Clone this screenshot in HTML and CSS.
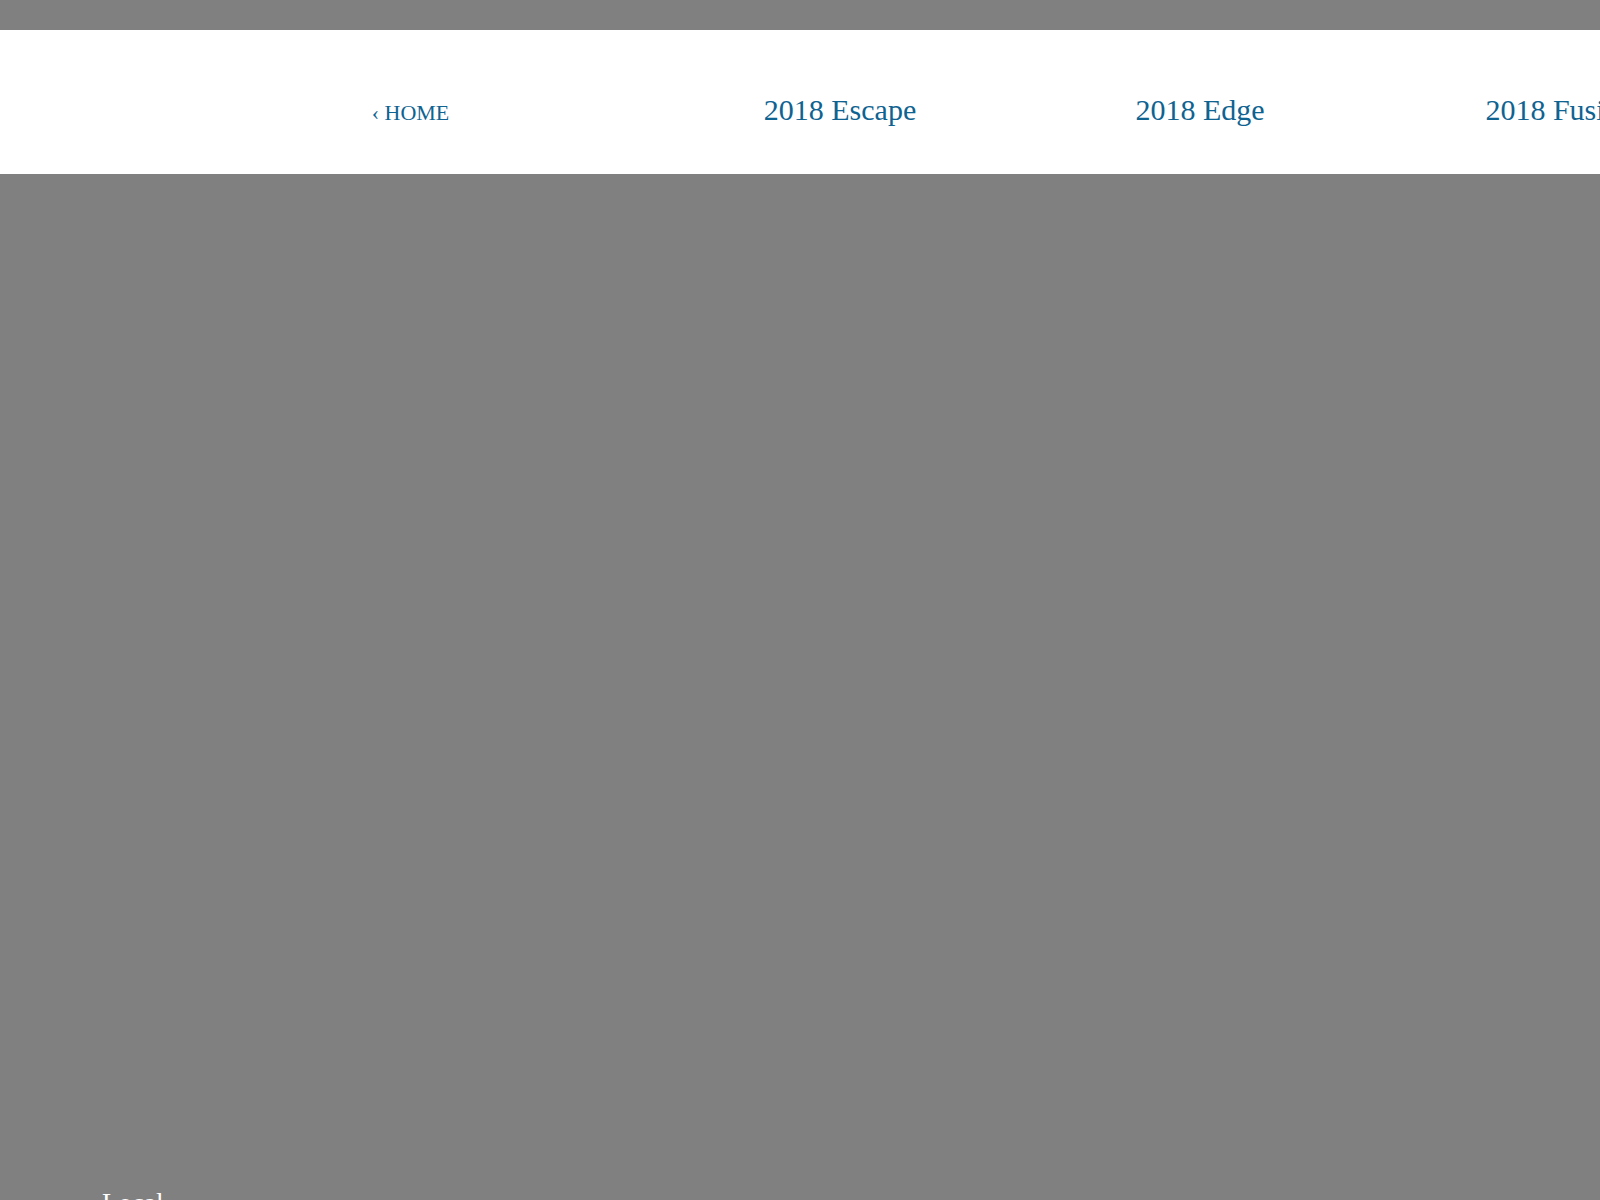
FILE: index.html
```html
<!DOCTYPE html>
<html>
<head>
<meta charset="utf-8">
<title>2018 Models</title>
<link rel="stylesheet" href="styles.css">
</head>
<body>
<div class="page">
  <div class="topbar"></div>
  <nav class="nav">
    <a class="nav-item nav-home" href="#">&lsaquo; HOME</a>
    <a class="nav-item" href="#">2018 Escape</a>
    <a class="nav-item" href="#">2018 Edge</a>
    <a class="nav-item" href="#">2018 Fusion</a>
  </nav>
  <main class="hero"></main>
  <section class="local">
    <h2 class="local-title">Local</h2>
  </section>
</div>
</body>
</html>
```
FILE: styles.css
```css
html, body {
  margin: 0;
  padding: 0;
  background: #808080;
  overflow: hidden;
}
.page {
  width: 1600px;
  font-family: "Liberation Serif", "Times New Roman", serif;
}
.topbar {
  height: 30px;
  background: #808080;
}
.nav {
  display: flex;
  align-items: baseline;
  background: #ffffff;
  height: 144px;
  box-sizing: border-box;
  padding: 62px 0 0 158px;
  white-space: nowrap;
  overflow: hidden;
}
.nav-item {
  flex: 0 0 360px;
  box-sizing: border-box;
  text-align: center;
  font-size: 30px;
  line-height: 36px;
  color: #0f6391;
  text-decoration: none;
}
.nav-home {
  flex: 0 0 502px;
  padding-left: 3px;
  font-size: 22px;
}
.hero {
  display: block;
  height: 1011px;
}
.local {
  padding-left: 102px;
}
.local-title {
  margin: 0;
  font-weight: normal;
  font-size: 27px;
  line-height: 36px;
  color: #ffffff;
}
```
